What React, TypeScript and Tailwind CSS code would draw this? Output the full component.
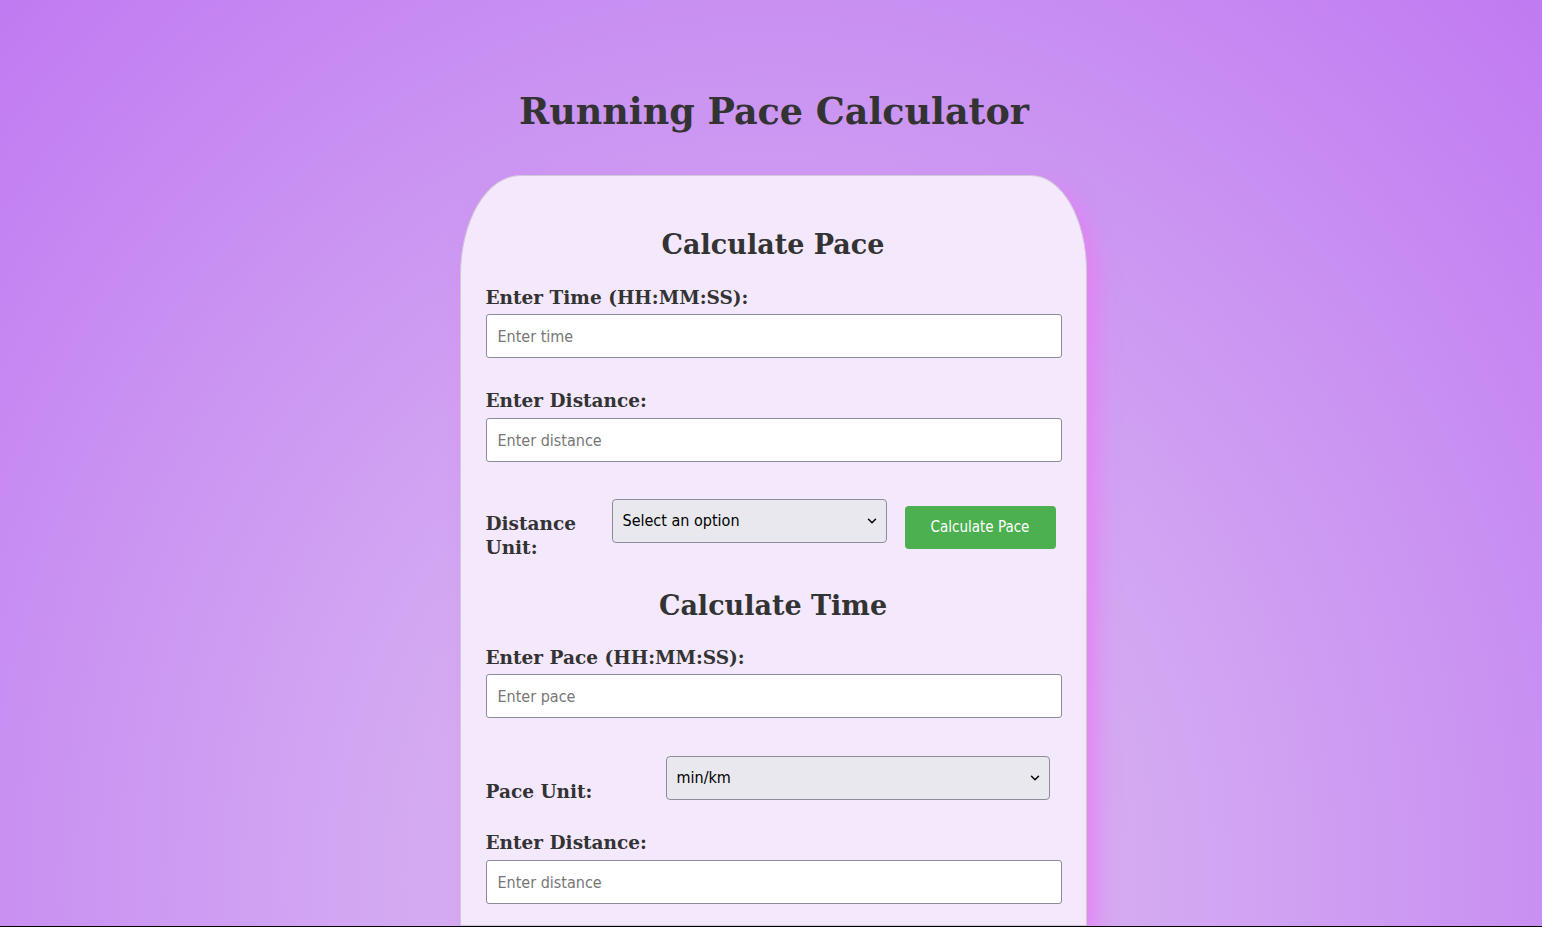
import { ChevronDown } from "lucide-react";

const serif = "font-['DejaVu_Serif',Georgia,serif]";
const sans = "font-['DejaVu_Sans_Condensed','DejaVu_Sans',sans-serif]";

const Label = ({ children, className = "" }: { children: React.ReactNode; className?: string }) => (
  <label className={`block text-[18.5px] font-bold leading-[24px] text-[#333] ${serif} ${className}`}>
    {children}
  </label>
);

const TextInput = ({ placeholder }: { placeholder: string }) => (
  <input
    type="text"
    placeholder={placeholder}
    className={`block h-[44px] w-[576px] rounded-[3px] border border-[#8c8a99] bg-white px-[11px] text-[16px] text-[#222] placeholder:text-[#767676] outline-none ${sans}`}
  />
);

const Select = ({ value, className = "" }: { value: string; className?: string }) => (
  <div className={`relative h-[44px] ${className}`}>
    <select
      defaultValue={value}
      className={`h-full w-full appearance-none rounded-[4px] border border-[#8f8c9c] bg-[#e9e8ee] pl-[10px] text-[16px] text-black outline-none ${sans}`}
    >
      <option>{value}</option>
    </select>
    <ChevronDown className="pointer-events-none absolute right-[8px] top-1/2 h-[14px] w-[14px] -translate-y-1/2 text-black" strokeWidth={2.5} />
  </div>
);

export default function App() {
  return (
    <div className="flex h-screen flex-col items-center overflow-hidden border-b border-black bg-[radial-gradient(ellipse_at_50%_95%,#dcbcf3_0%,#d2a6f2_40%,#c07af2_100%)]">
      <h1 className={`ml-[6px] mt-[88px] text-[36.5px] font-bold leading-[48px] text-[#333] ${serif}`}>
        Running Pace Calculator
      </h1>

      <div className="ml-[4px] mt-[39px] w-[627px] flex-1 rounded-tl-[60px_100px] rounded-tr-[56px_96px] border border-[#cfc8d6] bg-[#f3e8fc] px-[25px] pt-[49px] shadow-[10px_12px_22px_rgba(230,125,245,0.85)]">
        {/* Calculate Pace */}
        <h2 className={`text-center text-[27px] font-bold leading-[40px] text-[#333] ${serif}`}>
          Calculate Pace
        </h2>
        <Label className="mt-[21px]">Enter Time (HH:MM:SS):</Label>
        <div className="mt-[4px]">
          <TextInput placeholder="Enter time" />
        </div>
        <Label className="mt-[31px]">Enter Distance:</Label>
        <div className="mt-[5px]">
          <TextInput placeholder="Enter distance" />
        </div>

        <div className="mt-[37px] flex items-start">
          <Label className="mt-[13px] w-[110px]">Distance Unit:</Label>
          <Select value="Select an option" className="ml-[16px] w-[275px]" />
          <button
            className={`ml-[18px] mt-[7px] h-[43px] w-[151px] rounded-[4px] bg-[#4caf50] text-[15px] text-white ${sans}`}
          >
            Calculate Pace
          </button>
        </div>

        {/* Calculate Time */}
        <h2 className={`mt-[26px] text-center text-[27px] font-bold leading-[40px] text-[#333] ${serif}`}>
          Calculate Time
        </h2>
        <Label className="mt-[20px]">Enter Pace (HH:MM:SS):</Label>
        <div className="mt-[4px]">
          <TextInput placeholder="Enter pace" />
        </div>

        <div className="mt-[38px] flex items-start">
          <Label className="mt-[24px] w-[180px]">Pace Unit:</Label>
          <Select value="min/km" className="w-[384px]" />
        </div>

        <Label className="mt-[27px]">Enter Distance:</Label>
        <div className="mt-[5px]">
          <TextInput placeholder="Enter distance" />
        </div>
      </div>
    </div>
  );
}
